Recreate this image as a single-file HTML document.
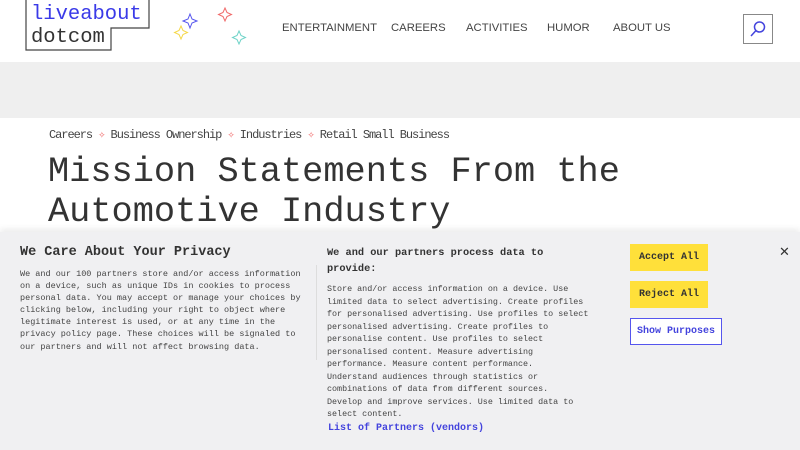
<!DOCTYPE html>
<html><head><meta charset="utf-8"><style>
*{margin:0;padding:0;box-sizing:border-box}
body{width:800px;height:450px;overflow:hidden;background:#fff;position:relative;font-family:"Liberation Mono",monospace;color:#333}
.abs{position:absolute;white-space:nowrap}
.nav{font-family:"Liberation Sans",sans-serif;font-size:11.3px;color:#444;top:22px}
.banner{position:absolute;left:0;top:232px;width:800px;height:218px;background:#f0f0f2;box-shadow:0 -3px 6px rgba(0,0,0,.08)}
.btn{position:absolute;left:630px;width:78px;height:27px;background:#ffe03a;font-weight:bold;font-size:10px;display:flex;align-items:center;justify-content:center;color:#333}
</style></head><body>
<svg class="abs" style="left:25px;top:0" width="127" height="52"><path d="M1 0V50H86V28H124V0" fill="none" stroke="#444" stroke-width="1.2"/></svg>
<div class="abs" style="left:31px;top:2px;font-size:20.5px;color:#3a3ae8;line-height:26px">liveabout</div>
<div class="abs" style="left:31px;top:25px;font-size:20.5px;color:#333;line-height:26px">dotcom</div>
<svg class="abs" style="left:170px;top:3px" width="80" height="42">
<path d="M20 11l2 5 5 2-5 2-2 5-2-5-5-2 5-2z" fill="none" stroke="#5555ee" stroke-width="1"/>
<path d="M55 5l2 4.5 4.5 2-4.5 2-2 4.5-2-4.5-4.5-2 4.5-2z" fill="none" stroke="#f06a6a" stroke-width="1"/>
<path d="M11 23l2 4.5 4.5 2-4.5 2-2 4.5-2-4.5-4.5-2 4.5-2z" fill="none" stroke="#f5d84a" stroke-width="1"/>
<path d="M69 28l2 4.5 4.5 2-4.5 2-2 4.5-2-4.5-4.5-2 4.5-2z" fill="none" stroke="#6fd3c8" stroke-width="1"/>
</svg>
<div class="abs nav" style="left:282px">ENTERTAINMENT</div>
<div class="abs nav" style="left:391px">CAREERS</div>
<div class="abs nav" style="left:466px">ACTIVITIES</div>
<div class="abs nav" style="left:547px">HUMOR</div>
<div class="abs nav" style="left:613px">ABOUT US</div>
<div class="abs" style="left:743px;top:14px;width:30px;height:30px;border:1px solid #888"></div>
<svg class="abs" style="left:749px;top:20px" width="18" height="18"><circle cx="10.5" cy="7" r="5" fill="none" stroke="#4444dd" stroke-width="1.5"/><path d="M7 10.5L2 16" stroke="#4444dd" stroke-width="1.5"/></svg>
<div class="abs" style="left:0;top:62px;width:800px;height:56px;background:#efefef"></div>
<div class="abs" style="left:49px;top:127px;font-size:12px;letter-spacing:-1.05px;color:#444">Careers <span style="color:#f06a6a">✧</span> Business Ownership <span style="color:#f06a6a">✧</span> Industries <span style="color:#f06a6a">✧</span> Retail Small Business</div>
<div class="abs" style="left:48px;top:152px;font-size:35.3px;line-height:40px;color:#333">Mission Statements From the<br>Automotive Industry</div>
<div class="banner"></div>
<div class="abs" style="left:20px;top:245px;font-size:13.5px;font-weight:bold;color:#333">We Care About Your Privacy</div>
<div class="abs" style="left:20px;top:268px;font-size:8.5px;line-height:12.1px;color:#444">We and our 100 partners store and/or access information<br>on a device, such as unique IDs in cookies to process<br>personal data. You may accept or manage your choices by<br>clicking below, including your right to object where<br>legitimate interest is used, or at any time in the<br>privacy policy page. These choices will be signaled to<br>our partners and will not affect browsing data.</div>
<div class="abs" style="left:316px;top:265px;width:1px;height:95px;background:#ddd"></div>
<div class="abs" style="left:327px;top:246px;font-size:10.3px;font-weight:bold;line-height:15.5px;color:#333">We and our partners process data to<br>provide:</div>
<div class="abs" style="left:327px;top:283px;font-size:8.4px;line-height:12.5px;color:#444">Store and/or access information on a device. Use<br>limited data to select advertising. Create profiles<br>for personalised advertising. Use profiles to select<br>personalised advertising. Create profiles to<br>personalise content. Use profiles to select<br>personalised content. Measure advertising<br>performance. Measure content performance.<br>Understand audiences through statistics or<br>combinations of data from different sources.<br>Develop and improve services. Use limited data to<br>select content.</div>
<div class="abs" style="left:328px;top:423px;font-size:10px;font-weight:bold;color:#4444dd">List of Partners (vendors)</div>
<div class="btn" style="top:244px">Accept All</div>
<div class="btn" style="top:281px">Reject All</div>
<div class="btn" style="top:318px;width:92px;background:#fff;border:1px solid #5555ee;color:#4444dd">Show Purposes</div>
<div class="abs" style="left:779px;top:244px;font-size:13px;font-family:'Liberation Sans',sans-serif;color:#333">✕</div>
</body></html>
